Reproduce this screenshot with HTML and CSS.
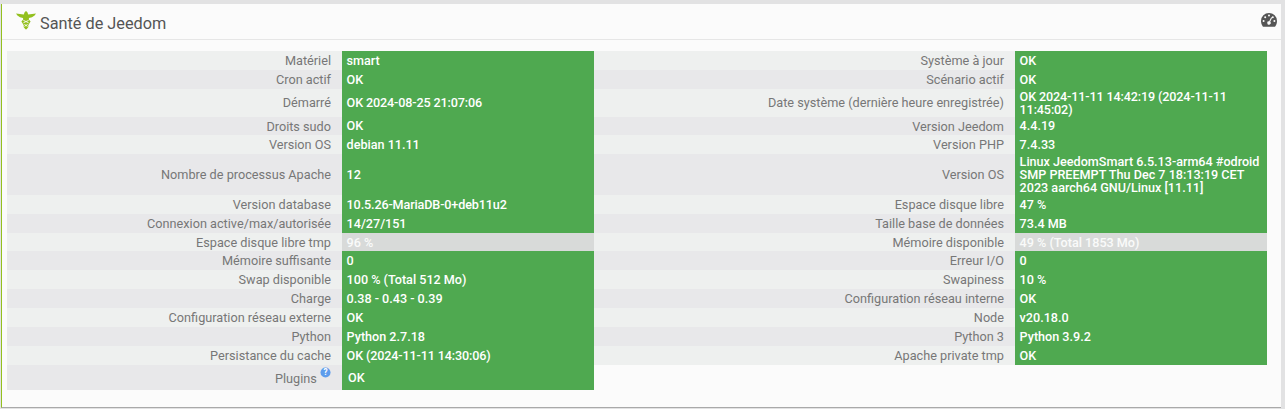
FILE: index.html
```html
<!DOCTYPE html>
<html lang="fr">
<head>
<meta charset="utf-8">
<title>Santé de Jeedom</title>
<link rel="stylesheet" href="styles.css">
</head>
<body>
<section class="panel">
  <header class="panel-head">
    <h3 class="panel-title">
      <svg class="logo" viewBox="0 0 20 19" aria-hidden="true">
        <path fill="#93c01f" d="M0 2.400 L7.800 3.400 L8.600 1.200 L10 0 L11.400 1.200 L12.200 3.400 L20 2.400 L18.600 4.600 L16 6.200 L13 7 L12.800 8.400 L14.600 10.600 L13 13 L12.200 14.400 L12.400 16 L10.800 18 L10 18.600 L9.200 18 L7.600 16 L7.800 14.400 L7 13 L5.400 10.600 L7.200 8.400 L7 7 L4 6.200 L1.400 4.600 Z"/>
        <path fill="none" stroke="#fbfbfb" stroke-width=".9" d="M7.400 9.400 Q10 10.500 12.600 11.800 M12.600 9.400 Q10 10.500 7.400 11.800 M8.400 13.400 Q10 14.400 11.600 15.400 M11.600 13.400 Q10 14.400 8.400 15.400"/>
      </svg>
      <span>Santé de Jeedom</span>
    </h3>
    <svg class="gauge" viewBox="0 0 16 14" aria-hidden="true">
      <path fill="#555" fill-rule="evenodd" d="M8 0a8 8 0 0 1 8 8c0 2.100-.6 4-1.800 5.400-.2.300-.5.400-.8.400H2.600c-.3 0-.6-.1-.8-.4A8.300 8.300 0 0 1 0 8a8 8 0 0 1 8-8ZM8 1.600a1 1 0 1 0 0 2 1 1 0 0 0 0-2ZM4.200 3.200a1 1 0 1 0 0 2 1 1 0 0 0 0-2ZM11.800 3.200a1 1 0 1 0 0 2 1 1 0 0 0 0-2ZM2.600 7a1 1 0 1 0 0 2 1 1 0 0 0 0-2ZM13.400 7a1 1 0 1 0 0 2 1 1 0 0 0 0-2ZM10.200 4.300 8.200 8.200a1.700 1.700 0 1 0 1 .5l1.900-4Z"/>
    </svg>
  </header>
  <div class="panel-body">
    <table class="health">
      <colgroup><col class="c-label1"><col class="c-value"><col class="c-label2"><col class="c-value"></colgroup>
      <tbody>
        <tr><th>Matériel</th><td>smart</td><th>Système à jour</th><td>OK</td></tr>
        <tr><th>Cron actif</th><td>OK</td><th>Scénario actif</th><td>OK</td></tr>
        <tr><th>Démarré</th><td class="num">OK 2024-08-25 21:07:06</td><th>Date système (dernière heure enregistrée)</th><td class="num">OK 2024-11-11 14:42:19 (2024-11-11 11:45:02)</td></tr>
        <tr><th>Droits sudo</th><td>OK</td><th>Version Jeedom</th><td>4.4.19</td></tr>
        <tr><th>Version OS</th><td>debian 11.11</td><th>Version PHP</th><td>7.4.33</td></tr>
        <tr><th>Nombre de processus Apache</th><td>12</td><th>Version OS</th><td>Linux JeedomSmart 6.5.13-arm64 #odroid SMP PREEMPT Thu Dec 7 18:13:19 CET 2023 aarch64 GNU/Linux [11.11]</td></tr>
        <tr><th>Version database</th><td class="num">10.5.26-MariaDB-0+deb11u2</td><th>Espace disque libre</th><td>47 %</td></tr>
        <tr><th>Connexion active/max/autorisée</th><td>14/27/151</td><th>Taille base de données</th><td>73.4 MB</td></tr>
        <tr class="warn"><th>Espace disque libre tmp</th><td>96 %</td><th>Mémoire disponible</th><td>49 % (Total 1853 Mo)</td></tr>
        <tr><th>Mémoire suffisante</th><td>0</td><th>Erreur I/O</th><td>0</td></tr>
        <tr><th>Swap disponible</th><td>100 % (Total 512 Mo)</td><th>Swapiness</th><td>10 %</td></tr>
        <tr><th>Charge</th><td>0.38 - 0.43 - 0.39</td><th>Configuration réseau interne</th><td>OK</td></tr>
        <tr><th>Configuration réseau externe</th><td>OK</td><th>Node</th><td>v20.18.0</td></tr>
        <tr><th>Python</th><td>Python 2.7.18</td><th>Python 3</th><td>Python 3.9.2</td></tr>
        <tr><th>Persistance du cache</th><td class="num">OK (2024-11-11 14:30:06)</td><th>Apache private tmp</th><td>OK</td></tr>
        <tr class="plugins"><th>Plugins <svg class="help" viewBox="0 0 12 12" aria-hidden="true"><circle cx="6" cy="6" r="5.500" fill="#5d9cec"/><text x="6" y="9.200" text-anchor="middle" class="help-q">?</text></svg></th><td>OK</td><th class="empty"></th><td class="empty"></td></tr>
      </tbody>
    </table>
  </div>
</section>
</body>
</html>
```
FILE: styles.css
```css
* { box-sizing: border-box; }
html, body { margin: 0; padding: 0; }
body {
  width: 1285px;
  height: 409px;
  overflow: hidden;
  background: #e2e2e3;
  padding: 4px 4px 0 1px;
  font-family: Roboto, "Liberation Sans", sans-serif;
}
.panel {
  height: 404px;
  background: #fbfbfb;
  border-left: 1px solid #93c01f;
  border-bottom: 1px solid #a9a9a9;
}
.panel-head {
  height: 36px;
  border-bottom: 1px solid #e6e6e6;
  display: flex;
  align-items: center;
  justify-content: space-between;
  padding: 0 4px 1px 14px;
}
.panel-title {
  margin: 0;
  padding-top: 4px;
  display: flex;
  align-items: center;
  gap: 4px;
  font-size: 16.300px;
  font-weight: 400;
  color: #555;
}
.logo { width: 20px; height: 19px; margin-top: -5px; }
.gauge { width: 16px; height: 14px; margin-top: -3px; }
.panel-body { padding: 10.700px 0 0 5px; }
.health {
  table-layout: fixed;
  border-collapse: collapse;
  width: 1260px;
  font-size: 12.700px;
}
.c-label1 { width: 335px; }
.c-label2 { width: 421px; }
.c-value { width: 252px; }
.health th, .health td { padding: 0; vertical-align: middle; }
.health th {
  text-align: right;
  font-weight: 400;
  color: #777;
  line-height: 17.900px;
  padding: 1px 11px 0 0;
}
.health td {
  background: #4fa950;
  color: #fff;
  font-size: 12.600px;
  font-weight: 500;
  line-height: 13px;
  padding: 1px 4.600px;
}
.health td.num { letter-spacing: -0.13px; }
.health tr:nth-child(odd) th { background: #eef0ef; }
.health tr:nth-child(even) th { background: #e8e8ea; }
.health .warn th { background: #d8dad9; line-height: 17.300px; }
.health .warn td { background: #d8dad9; color: #fafafa; }
.health .plugins td { padding: 6px; }
.health .plugins th { height: 25.200px; line-height: 20px; }
.health .plugins .empty { background: transparent; }
.help { width: 11px; height: 11px; vertical-align: 5px; }
.help-q { font-size: 9px; font-weight: 700; fill: #fff; font-family: Roboto, sans-serif; }
```
